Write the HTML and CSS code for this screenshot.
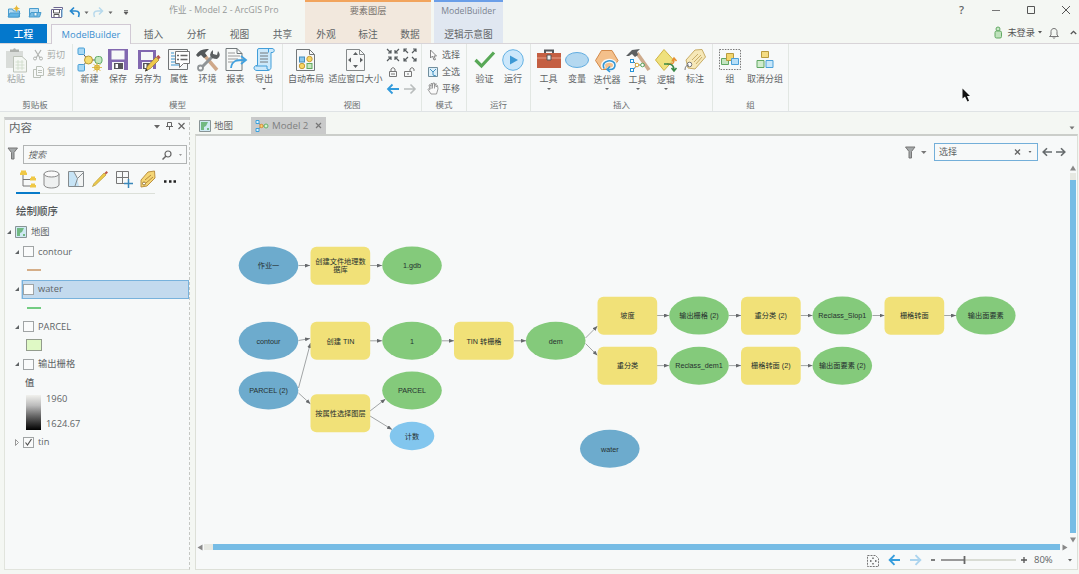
FILE: index.html
```html
<!DOCTYPE html>
<html lang="zh-CN">
<head>
<meta charset="utf-8">
<title>作业 - Model 2 - ArcGIS Pro</title>
<link rel="stylesheet" href="styles.css">
</head>
<body>
<header class="titlebar">
  <div class="quick">
    <svg width="137" height="24" viewBox="0 0 137 24">
      <g stroke="#489ccd" fill="#b5dcf3"><path d="M8.500 17V9h4l1 2h6v6z"/><path d="M8 17l2-4h10l-1.500 4z" fill="#62b5e5"/></g>
      <circle cx="16.500" cy="8.500" r="2" fill="#f2c84a"/><path d="M16.500 5.500v6M13.500 8.500h6" stroke="#dfb139" stroke-width=".8"/>
      <g stroke="#489ccd" fill="#b5dcf3"><path d="M29.500 17V8.500h9V12"/><path d="M29 17l2-4.500h10l-1.500 4.500z" fill="#75bce4"/><path d="M34 13v3h3v-3" fill="#f5f7f5"/></g>
      <path d="M53.500 7.500h9v2M51.500 9.500h10v8h-10z" fill="#fff" stroke="#6c6690"/><path d="M53.500 10v3h6v-3M54 17v-2.500h5V17" fill="none" stroke="#555"/><path d="M62 9v8" stroke="#58a8db"/>
      <path d="M74 7.500L70.500 11l3.500 3.500M71 11h4.500c3.500 0 4.500 2.500 3 6" fill="none" stroke="#2688ce" stroke-width="1.700"/>
      <path d="M84.500 11.500h4l-2 2.500z" fill="#666"/>
      <path d="M99 7.500l3.500 3.500-3.500 3.500M102 11h-4.500c-3.500 0-4.500 2.500-3 6" fill="none" stroke="#b7d9ec" stroke-width="1.500"/>
      <path d="M108.500 11.500h4l-2 2.500z" fill="#666"/><path d="M124 10.500h4M124 12h4l-2 2.500z" stroke="#555" fill="#555" stroke-width=".7"/>
    </svg>
  </div>
  <div class="app-title">作业 - Model 2 - ArcGIS Pro</div>
  <div class="context context-layer">要素图层</div>
  <div class="context context-model">ModelBuilder</div>
  <div class="window-buttons">
    <span class="help">?</span>
    <svg width="10" height="10"><path d="M1 5.500h8" stroke="#777"/></svg>
    <svg width="10" height="10"><path d="M1.500 1.500h7v7h-7z" fill="none" stroke="#555"/></svg>
    <svg width="10" height="10"><path d="M1 1l8 8M9 1l-8 8" stroke="#555"/></svg>
  </div>
</header>
<nav class="tabs">
  <a class="tab tab-file">工程</a>
  <a class="tab tab-active">ModelBuilder</a>
  <a class="tab">插入</a><a class="tab">分析</a><a class="tab">视图</a><a class="tab">共享</a>
  <div class="layer-tabs"><a class="tab">外观</a><a class="tab">标注</a><a class="tab">数据</a></div>
  <a class="tab tab-diagram">逻辑示意图</a>
  <div class="account">
    <svg width="10" height="13" viewBox="0 0 10 13"><circle cx="5" cy="3" r="2" fill="#c9e8c7" stroke="#62a963"/><rect x="2" y="5" width="6.500" height="7" rx="1.500" fill="#bfe2bc" stroke="#62a963"/></svg>
    <span class="user">未登录</span>
    <svg class="user-caret" width="4" height="3"><path d="M0 0h4l-2 2.500z" fill="#555"/></svg>
    <svg class="bell" width="10" height="12" viewBox="0 0 10 12"><path d="M.5 9.500L2 8V4.500C2 .5 8 .5 8 4.500V8l1.500 1.500zM4 10.500c0 1 2 1 2 0" fill="none" stroke="#777"/></svg>
    <svg class="collapse" width="7" height="5"><path d="M.8 4l2.700-2.700L6.200 4" fill="none" stroke="#555" stroke-width="1.300"/></svg>
  </div>
</nav>

<section class="ribbon">
  <div class="group group-clipboard">
    <div class="tools">
      <div class="tool faded"><svg width="22" height="26" viewBox="0 0 22 26"><path d="M1 4h17v17H1z" fill="#d9dcd9"/><path d="M5 5V2.500h3Q9.500 0 11 2.500h3V5z" fill="#aeb1ad"/><path d="M8.500 9.500H17l4.500 4V25h-13z" fill="#f4f7f3" stroke="#bdc3b9"/><path d="M10.500 15h8M10.500 18h9M10.500 21h9M13 13v10M17 13v10" stroke="#cfdcc9" stroke-width=".8"/></svg><span>粘贴</span></div>
      <div class="lines faded">
        <div class="line"><svg width="12" height="12"><path d="M3 1l5 8M9 1L4 9" stroke="#b0b3b0" stroke-width="1.200"/><circle cx="3" cy="9.500" r="1.500" fill="none" stroke="#b0b3b0"/><circle cx="9" cy="9.500" r="1.500" fill="none" stroke="#b0b3b0"/></svg><span>剪切</span></div>
        <div class="line"><svg width="12" height="12"><path d="M4.500.5h5l2 2v7h-7zM4 3.500H1.500v8h7V10M6 4.500h4M6 6.500h4" fill="none" stroke="#bbc1b9"/></svg><span>复制</span></div>
      </div>
    </div>
    <div class="caption">剪贴板</div>
  </div>
  <div class="group group-model">
    <div class="tools">
      <div class="tool"><svg width="26" height="26" viewBox="0 0 26 26"><path d="M4 4l7 9-7 8M11 13h10" fill="none" stroke="#555"/><rect x="1" y="1" width="6.500" height="6.500" rx="1" fill="#a8d8f4" stroke="#479fd6"/><rect x="1" y="17.500" width="6.500" height="6.500" rx="1" fill="#a8d8f4" stroke="#479fd6"/><circle cx="11.500" cy="13" r="4" fill="#f4dc72" stroke="#b89a33"/><rect x="18" y="9.500" width="7" height="7" rx="2.500" fill="#c5e8c1" stroke="#5faa68"/><circle cx="20" cy="20.500" r="2.500" fill="#f8e36d" stroke="#d6ad36"/><path d="M20 15.500v10M15 20.500h10M16.500 17l7 7M23.500 17l-7 7" stroke="#d6ad36" stroke-width=".8"/></svg><span>新建</span></div>
      <div class="tool"><svg width="22" height="26" viewBox="0 0 22 26"><path d="M1 2h20v21H1z" fill="#8268b0"/><path d="M4.500 3.500h13v9h-13zM5 15h12v8H5z" fill="#f7f8f8"/><path d="M7 16h9v6H7z" fill="#56545a"/><path d="M8.500 17h2.500v4H8.500z" fill="#fff"/></svg><span>保存</span></div>
      <div class="tool"><svg width="26" height="26" viewBox="0 0 26 26"><path d="M3 3h18v19H3z" fill="#8268b0"/><path d="M6 5h12v8H6zM7 15h11v7H7z" fill="#f7f8f8"/><path d="M8 16h7v6H8z" fill="#56545a"/><path d="M9.500 17h2v4h-2z" fill="#fff"/><path d="M10.500 24l2-5L21 10l3 3-8.500 8.500z" fill="#efc94b" stroke="#927a35" stroke-width=".7"/><path d="M21.500 9.500L23.500 8l2 2.500-2 2z" fill="#b4524c"/><path d="M10 24.500l1-3 2 1.800z" fill="#333"/></svg><span>另存为</span></div>
      <div class="tool"><svg width="22" height="26" viewBox="0 0 22 26"><path d="M.5 2.500h19v20H.5z" fill="#f7f8f8" stroke="#707476"/><path d="M3 6h3M3 9h4M3 12h4M3 15h4M3 18h9" stroke="#3b94ce" stroke-width="1.200"/><path d="M7.500 4.500h14v12h-6l-4 4v-4h-4z" fill="#fff" stroke="#777"/><path d="M9 8.500h2M9 12.500h2M12.500 8.500h7M12.500 12.500h7" stroke="#666" stroke-width="1.300"/></svg><span>属性</span></div>
      <div class="tool"><svg width="26" height="26" viewBox="0 0 26 26"><path d="M9 8l13 15" stroke="#cfa889" stroke-width="3.500"/><path d="M19 8L6 21" stroke="#909598" stroke-width="3"/><circle cx="5.500" cy="21" r="2.500" fill="#f7f8f8" stroke="#909598" stroke-width="1.800"/><path d="M1 8q4-7 13-6l-4 4 2 3-3 2-3-3-3 2z" fill="#535759"/><path d="M18 3v4l4 1 1-4q4 5-1 8-6 0-7-4 0-3 3-5z" fill="#5c6062"/></svg><span>环境</span></div>
      <div class="tool"><svg width="24" height="26" viewBox="0 0 24 26"><path d="M2 1.500h11l5 5v17H2z" fill="#f7f9f8" stroke="#71787b"/><path d="M13 1.500v5h5" fill="none" stroke="#71787b"/><path d="M4 6h7M4 9h12M4 12h10M4 15h5" stroke="#999" stroke-width="1"/><path d="M7 21c1-8 6-8 14-8" fill="none" stroke="#42a1df" stroke-width="1.800"/><path d="M17 9l5 4-5 4" fill="none" stroke="#42a1df" stroke-width="1.800"/></svg><span>报表</span></div>
      <div class="tool"><svg width="24" height="26" viewBox="0 0 24 26"><path d="M7 1.500h13c3 0 3 4 0 4h-1v15c0 2-2 3-3 3H5c-4 0-4-5 0-5h.5V3q0-1.500 1.500-1.500z" fill="#cce9fb" stroke="#429ed9"/><path d="M16.500 1.500v4M4 19h11q-1 4 2 4" fill="none" stroke="#429ed9"/><path d="M8 6h8M8 9h8M8 12h8M8 15h8" stroke="#72797c"/></svg><span>导出</span><i class="caret"></i></div>
    </div>
    <div class="caption">模型</div>
  </div>
  <div class="group group-view">
    <div class="tools">
      <div class="tool"><svg width="22" height="26" viewBox="0 0 22 26"><path d="M1.500 2.500h13l5 5v16h-18z" fill="#f7f8f8" stroke="#73787a"/><path d="M14.500 2.500v5h5" fill="none" stroke="#73787a"/><rect x="4.500" y="10" width="5" height="5" fill="#8ac8ed" stroke="#468ebb"/><circle cx="14.500" cy="12" r="2.700" fill="#f7d664" stroke="#c79c36"/><circle cx="7" cy="19" r="2.700" fill="#f7d664" stroke="#c79c36"/><rect x="12" y="16.500" width="5" height="5" fill="#c7e8c0" stroke="#61a95f"/></svg><span>自动布局</span></div>
      <div class="tool"><svg width="22" height="26" viewBox="0 0 22 26"><path d="M1.500 2.500h13l5 5v16h-18z" fill="#f7f8f8" stroke="#858a8b"/><path d="M14.500 2.500v5h5" fill="none" stroke="#858a8b"/><path d="M8 8l2.500-3L13 8zM8 18l2.500 3 2.500-3zM6 10.500L3 13l3 2.500zM15 10.500l3 2.500-3 2.500z" fill="#5c6062"/></svg><span>适应窗口大小</span></div>
      <div class="mini">
        <svg width="14" height="14" viewBox="0 0 14 14"><path d="M1 1l4 4M2 5h3V2M13 1L9 5M9 2v3h3M1 13l4-4M2 9h3v3M13 13L9 9M9 12V9h3" fill="none" stroke="#555b5e" stroke-width="1.200"/></svg>
        <svg width="14" height="14" viewBox="0 0 14 14"><path d="M5 5L1 1M4 1H1v3M9 5l4-4M10 1h3v3M5 9l-4 4M1 10v3h3M9 9l4 4M13 10v3h-3" fill="none" stroke="#555b5e" stroke-width="1.200"/></svg>
        <svg width="12" height="12"><path d="M2.500 5.500h7v5h-7zM4 5V3q2-3 4 0v2M4 8h4" fill="none" stroke="#777"/></svg>
        <svg width="13" height="12"><path d="M1.500 5.500h7v5h-7zM7 5V3q2-3 4 0v2M4 8h2" fill="none" stroke="#777"/></svg>
        <svg width="14" height="12"><path d="M13 6H2M6.500 1.500L2 6l4.500 4.500" fill="none" stroke="#329bdc" stroke-width="1.800"/></svg>
        <svg width="14" height="12"><path d="M1 6h11M7.500 1.500L12 6l-4.500 4.500" fill="none" stroke="#b9bdbd" stroke-width="1.600"/></svg>
      </div>
    </div>
    <div class="caption">视图</div>
  </div>
  <div class="group group-mode">
    <div class="lines">
      <div class="line"><svg width="12" height="12"><path d="M3.500 1v8l2-2 1.500 4 1.500-.5L7 7h2.500z" fill="#fafafa" stroke="#777" stroke-width=".9"/></svg><span>选择</span></div>
      <div class="line"><svg width="12" height="12"><path d="M1.500 1.500h9v9h-9z" fill="#dceffa" stroke="#718e9d"/><path d="M3 3l3 3 3-3M6 6v3l3 1" fill="none" stroke="#4694c3"/></svg><span>全选</span></div>
      <div class="line"><svg width="12" height="13"><path d="M4 12L1 7.500q0-1.500 2 0L2 3q1-1 2 1V1.500h1.300V4L6 1h1.500v3L9 1.500V5l1.500-1.500Q12 6 9.500 12zM4 4v3M5.500 4v2.500M7.500 4v2.500" fill="#fafafa" stroke="#858585" stroke-width=".8"/></svg><span>平移</span></div>
    </div>
    <div class="caption">模式</div>
  </div>
  <div class="group group-run">
    <div class="tools">
      <div class="tool"><svg width="22" height="26" viewBox="0 0 22 26"><path d="M1.500 13l6 6L20 5.500" fill="none" stroke="#58a857" stroke-width="3.200"/></svg><span>验证</span></div>
      <div class="tool"><svg width="24" height="26" viewBox="0 0 24 26"><circle cx="12" cy="13" r="10.300" fill="#cbe7fb" stroke="#66b3e4"/><path d="M9 8.500v9l8-4.500z" fill="#3d99d5"/></svg><span>运行</span></div>
    </div>
    <div class="caption">运行</div>
  </div>
  <div class="group group-insert">
    <div class="tools">
      <div class="tool"><svg width="26" height="26" viewBox="0 0 26 26"><path d="M9 6V3.500h8V6" fill="none" stroke="#54575a" stroke-width="2"/><path d="M1 6h24v15H1z" fill="#c45f42"/><path d="M1 11h10M15 11h10" stroke="#e7a18a" stroke-width="1.200"/><path d="M11 8h4v5h-4z" fill="#eee" stroke="#555"/></svg><span>工具</span><i class="caret"></i></div>
      <div class="tool"><svg width="26" height="26" viewBox="0 0 26 26"><ellipse cx="13" cy="13" rx="11.500" ry="7.500" fill="#b4d8f0" stroke="#62ade0"/></svg><span>变量</span></div>
      <div class="tool low"><svg width="26" height="26" viewBox="0 0 26 26"><path d="M7.500 3.500h10.500l6 10-6 9H7.500l-6-9z" fill="#f4c08b" stroke="#d28a4b"/><path d="M10 21.500c-5-9 11-10 11-3.500 0 3-2 4.500-5 4.500h-3" fill="none" stroke="#f7f8f8" stroke-width="4"/><path d="M10 21.500c-4-9 11-10 11-3.500 0 3-2 4.500-5 4.500h-3M16 19.500L13 22.500l3 2.500" fill="none" stroke="#3597d4" stroke-width="1.600"/></svg><span>迭代器</span><i class="caret"></i></div>
      <div class="tool low"><svg width="26" height="26" viewBox="0 0 26 26"><path d="M12 6l12 17" stroke="#ceab8c" stroke-width="3.600"/><path d="M1 9l6-6 8-1-3 3 1 3-3 2-3-3-3 2z" fill="#5b5f61"/><path d="M8 14l4 4-4 5M12 18h8" fill="none" stroke="#777"/><rect x="5.500" y="12.500" width="3" height="3" fill="#fff" stroke="#2693d8"/><rect x="5.500" y="21.500" width="3" height="3" fill="#fff" stroke="#2693d8"/><circle cx="12" cy="18" r="1.800" fill="#fff" stroke="#dca832"/><circle cx="17.500" cy="18" r="1.800" fill="#fff" stroke="#58a55a"/></svg><span>工具</span><i class="caret"></i></div>
      <div class="tool low"><svg width="26" height="26" viewBox="0 0 26 26"><path d="M11 2.500L20.500 13 11 23.500 2.500 13z" fill="#efe17d" stroke="#d0b545"/><path d="M14 17h4q3 0 3-5m-2 2l2-3 2.500 3" fill="none" stroke="#e69234" stroke-width="1.500"/><path d="M11 17h4q6 0 6 6m-2.500-2l2.500 3 2.500-3" fill="none" stroke="#398947" stroke-width="1.600"/></svg><span>逻辑</span><i class="caret"></i></div>
      <div class="tool"><svg width="26" height="26" viewBox="0 0 26 26"><path d="M4 13L13 3l7-.5 3.500 7.500L13 22l-7-1z" fill="#f6e8b8" stroke="#c8ad67"/><path d="M10 13l6-6M12 15l7-7M14 17l6-7" stroke="#c8ad67"/><circle cx="7.500" cy="17.500" r="2.300" fill="#fff" stroke="#777"/><path d="M7 18q-4 0-4 5" fill="none" stroke="#777"/></svg><span>标注</span></div>
    </div>
    <div class="caption">插入</div>
  </div>
  <div class="group group-group">
    <div class="tools">
      <div class="tool"><svg width="24" height="26" viewBox="0 0 24 26"><path d="M1.500 2.500h21v20h-21z" fill="none" stroke="#777" stroke-dasharray="1.500 1.200"/><path d="M3.500 11.500h7v6h-7z" fill="#c4e5c0" stroke="#60a763"/><path d="M8.500 6.500h7v7h-7z" fill="#f2d56c" stroke="#b99b3e"/><path d="M13.500 11.500h7v6h-7z" fill="#b7dff7" stroke="#4ba1d9"/></svg><span>组</span></div>
      <div class="tool"><svg width="24" height="26" viewBox="0 0 24 26"><path d="M8.500 4.500h7v6h-7z" fill="#f4dc83" stroke="#b99b3e"/><path d="M4 13.500h7v7H4z" fill="#d0eccd" stroke="#60a763"/><path d="M13 13.500h7v7h-7z" fill="#c8e7fa" stroke="#4ba1d9"/></svg><span>取消分组</span></div>
    </div>
    <div class="caption">组</div>
  </div>
</section>

<main class="workspace">
  <aside class="contents">
    <div class="pane-head"><h1>内容</h1>
      <svg width="36" height="10" viewBox="0 0 36 10"><path d="M2 4h6L5 7.500z" fill="#666"/><path d="M15.500 5.500V1.500h4v4M14 5.500h7M17.500 6v3" stroke="#666" fill="none"/><path d="M26.500 2l6 6M32.500 2l-6 6" stroke="#666" stroke-width="1.200"/></svg>
    </div>
    <div class="find-row">
      <svg width="12" height="13"><path d="M1 1h9.500L7 5.500V12H4.500V5.500z" fill="#a4a8a9" stroke="#777"/></svg>
      <div class="find"><span>搜索</span><svg width="22" height="10" viewBox="0 0 22 10"><circle cx="6" cy="4" r="3" fill="none" stroke="#666" stroke-width="1.200"/><path d="M4 6L.5 9.500" stroke="#666" stroke-width="1.500"/><path d="M17 4h3l-1.500 2z" fill="#999"/></svg></div>
    </div>
    <div class="modes">
      <svg width="160" height="24" viewBox="0 0 160 24">
        <path d="M7 7v11h7M7 11.500h7" fill="none" stroke="#777"/><path d="M4 7V4.500h1V2.500h5v2h1V7zM14 12.500V10h1V8.500h4V10h1v2.500zM14 19.500V17h1v-1.500h4V17h1v2.500z" fill="#efc846"/>
        <path d="M28 6v11c1 4 14 4 15 0V6" fill="#eef0f0" stroke="#888"/><ellipse cx="35.500" cy="6" rx="7.500" ry="3" fill="#fafafa" stroke="#888"/>
        <path d="M52.500 3.500h15v15h-15z" fill="#f2f4f4" stroke="#858b8e"/><path d="M53 4h5l3 6 2 8H53z" fill="#c7e4f6"/><path d="M58 4l3.500 6.500L59 18M61.500 10.500L67 5" fill="none" stroke="#858b8e"/>
        <path d="M76.500 18.500l1.500-3L88 5l2 2-10.500 10z" fill="#edca4a" stroke="#b99a35" stroke-width=".7"/><path d="M88.500 5l2-2 1.500 1.500-2 2z" fill="#bd5748"/>
        <path d="M100.500 3.500h12v12h-12zM106.500 3.500v12M100.500 9.500h12" fill="none" stroke="#777"/><path d="M108 15.500h9M112.500 11v9" stroke="#3987ba" stroke-width="1.500"/>
        <path d="M125 12l7-8 6.500-1 .5 7-8 8-6 1z" fill="#f5d675" stroke="#bc9142"/><path d="M129 12l6-5M130 15l7-6" stroke="#b88b3d"/><circle cx="128" cy="15.500" r="1.500" fill="#fff" stroke="#997735"/>
        <path d="M148 13.500h2.500M153 13.500h2.500M157.500 13.500h2.500" stroke="#222" stroke-width="2.300"/>
      </svg>
      <div class="mode-track"><i></i></div>
    </div>
    <h2>绘制顺序</h2>
    <div class="tree">
      <div class="node root"><i class="open"></i><svg class="map-icon" width="12" height="12"><path d="M.5.500h11v11H.5z" fill="#cfeaf3" stroke="#889495"/><path d="M2 2h7L7 6 5 7v3H2zM8 8h2v2H8z" fill="#71b982"/></svg><span>地图</span></div>
      <div class="node"><i class="open"></i><b class="check"></b><span>contour</span></div>
      <div class="symbol"><i class="stroke stroke-contour"></i></div>
      <div class="node selected"><i class="open"></i><b class="check"></b><span>water</span></div>
      <div class="symbol"><i class="stroke stroke-water"></i></div>
      <div class="node"><i class="open"></i><b class="check"></b><span>PARCEL</span></div>
      <div class="symbol"><i class="patch"></i></div>
      <div class="node"><i class="open"></i><b class="check"></b><span>输出栅格</span></div>
      <div class="value">值</div>
      <div class="ramp"><i></i><div class="ramp-text"><span>1960</span><span>1624.67</span></div></div>
      <div class="node"><svg class="closed" width="5" height="7"><path d="M.5.500v6l3-3z" fill="none" stroke="#999"/></svg><b class="check"><svg width="9" height="9"><path d="M1.500 4.500l2 2.500 4-6" fill="none" stroke="#555" stroke-width="1.200"/></svg></b><span>tin</span></div>
    </div>
  </aside>

  <section class="document">
    <div class="doc-tabs">
      <div class="doc-tab"><svg class="map-icon" width="12" height="12"><path d="M.5.500h11v11H.5z" fill="#cfeaf3" stroke="#889495"/><path d="M2 2h7L7 6 5 7v3H2zM8 8h2v2H8z" fill="#71b982"/></svg><span>地图</span></div>
      <div class="doc-tab current"><svg width="14" height="12"><path d="M3 2l3 4-3 4M6 6h5" fill="none" stroke="#888"/><path d="M1 .5h3v3H1zM1 8.500h3v3H1z" fill="#dff2fb" stroke="#3ba1dd"/><circle cx="6.500" cy="6" r="1.700" fill="#f7d371" stroke="#d78c36"/><circle cx="11" cy="6" r="2" fill="#d8efd4" stroke="#62b367"/></svg><span>Model 2</span><svg width="7" height="7"><path d="M1 1l5 5M6 1L1 6" stroke="#777" stroke-width="1.200"/></svg></div>
      <svg class="doc-menu" width="6" height="4"><path d="M.5.500h5L3 3.500z" fill="#777"/></svg>
    </div>
    <div class="canvas">
      <div class="canvas-bar">
        <svg width="22" height="13"><path d="M.5 1H10L6.500 5.500V12H4V5.500z" fill="#a4a8a9" stroke="#777"/><path d="M16 5h5.500l-2.700 3z" fill="#777"/></svg>
        <div class="filter"><span>选择</span><svg width="20" height="8"><path d="M1 1.500l5 5M6 1.500l-5 5" stroke="#666" stroke-width="1.300"/><path d="M14.500 3h3L16 5z" fill="#666"/></svg></div>
        <svg width="24" height="10"><path d="M10 5H1.500M5 1.200L1.200 5 5 8.800M14 5h8.500M19 1.200L22.800 5 19 8.800" fill="none" stroke="#666b6d" stroke-width="1.600"/></svg>
      </div>
      <div class="canvas-body">
        <svg class="diagram" width="874" height="378" viewBox="195 165 874 378">
          <defs><marker id="arrow" viewBox="0 0 5 4" refX="5" refY="2" markerWidth="5" markerHeight="4" markerUnits="userSpaceOnUse" orient="auto"><path d="M0 0l5 2-5 2z"/></marker></defs>
          <g class="edges">
            <path d="M298.500 265.500H310"/><path d="M370 265.500H382"/>
            <path d="M298.500 340.500L310 338.500"/><path d="M370 340.800H382"/><path d="M442 340.800H454"/><path d="M514 340.800H526"/>
            <path d="M298.500 388L310.500 343"/><path d="M298.500 393L310.500 404"/><path d="M370 411L385.500 399"/><path d="M370 416L392 429.500"/>
            <path d="M585.500 338L597.500 326"/><path d="M585.500 343.500L597.500 355.500"/>
            <path d="M657 315.500H669"/><path d="M729 315.500H741"/><path d="M800.500 315.500H812.500"/><path d="M872.500 315.500H884.500"/><path d="M944 315.500H956"/>
            <path d="M657 365.600H669"/><path d="M729 365.600H741"/><path d="M800.500 365.600H812.500"/>
          </g>
          <g class="input"><ellipse cx="268.500" cy="265.500" rx="29.800" ry="19"/><ellipse cx="268.500" cy="340.700" rx="29.800" ry="19"/><ellipse cx="268.500" cy="390.500" rx="29.800" ry="19"/><ellipse cx="609.800" cy="448.800" rx="29.800" ry="19"/></g>
          <g class="process"><rect x="310.500" y="246.700" width="59.700" height="38" rx="6"/><rect x="310.500" y="321.800" width="59.700" height="38" rx="6"/><rect x="454" y="321.800" width="59.700" height="38" rx="6"/><rect x="310.500" y="394.200" width="59.700" height="38" rx="6"/><rect x="597.500" y="296.800" width="59.700" height="38" rx="6"/><rect x="741" y="296.800" width="59.700" height="38" rx="6"/><rect x="884.500" y="296.800" width="59.700" height="38" rx="6"/><rect x="597.500" y="346.800" width="59.700" height="38" rx="6"/><rect x="741" y="346.800" width="59.700" height="38" rx="6"/></g>
          <g class="output"><ellipse cx="412" cy="265.500" rx="29.800" ry="19"/><ellipse cx="412" cy="340.700" rx="29.800" ry="19"/><ellipse cx="555.700" cy="340.700" rx="29.800" ry="19"/><ellipse cx="412" cy="390.500" rx="29.800" ry="19"/><ellipse cx="699" cy="315.600" rx="29.800" ry="19"/><ellipse cx="842.300" cy="315.600" rx="29.800" ry="19"/><ellipse cx="985.800" cy="315.600" rx="29.800" ry="19"/><ellipse cx="699" cy="365.700" rx="29.800" ry="19"/><ellipse cx="842.300" cy="365.700" rx="29.800" ry="19"/></g>
          <ellipse class="derived" cx="412" cy="436" rx="22.300" ry="14.200"/>
          <g class="labels">
            <text x="268.500" y="268">作业一</text><text x="340.500" y="264">创建文件地理数</text><text x="340.500" y="272">据库</text><text x="412" y="268">1.gdb</text>
            <text x="268.500" y="343.500">contour</text><text x="340.500" y="343.500">创建 TIN</text><text x="412" y="343.500">1</text><text x="484" y="343.500">TIN 转栅格</text><text x="555.700" y="343.500">dem</text>
            <text x="268.500" y="393.200">PARCEL (2)</text><text x="340.500" y="416">按属性选择图层</text><text x="412" y="393.200">PARCEL</text><text x="412" y="438.700">计数</text>
            <text x="627.500" y="318.300">坡度</text><text x="699" y="318.300">输出栅格 (2)</text><text x="770.800" y="318.300">重分类 (2)</text><text x="842.300" y="318.300">Reclass_Slop1</text><text x="914.300" y="318.300">栅格转面</text><text x="985.800" y="318.300">输出面要素</text>
            <text x="627.500" y="368.300">重分类</text><text x="699" y="368.300">Reclass_dem1</text><text x="770.800" y="368.300">栅格转面 (2)</text><text x="842.300" y="368.300">输出面要素 (2)</text><text x="609.800" y="451.500">water</text>
          </g>
        </svg>
        <div class="vscroll"><svg width="7" height="6"><path d="M0 5.500h6L3 .5z" fill="#888"/></svg><i class="track"></i><i class="thumb"></i><svg width="7" height="6"><path d="M0 .5h6L3 5.500z" fill="#888"/></svg></div>
      </div>
      <div class="hscroll"><svg width="6" height="7"><path d="M5.500.500v6L.5 3.500z" fill="#888"/></svg><i class="track"></i><i class="thumb"></i><svg width="6" height="7"><path d="M.5.500v6l5-3z" fill="#888"/></svg></div>
      <div class="status">
        <svg width="12" height="13" viewBox="0 0 12 13"><path d="M.5 1.500h8l3 3v8H.5z" fill="none" stroke="#777" stroke-dasharray="2 1"/><path d="M6 3.500v1.500M6 9v1.500M3 7h1.500M8 7h1.500" stroke="#555" stroke-width="1.300"/></svg>
        <svg class="nav-left" width="13" height="12"><path d="M12 6H2M6.500 1.200L1.700 6l4.800 4.800" fill="none" stroke="#369ddd" stroke-width="1.900"/></svg>
        <svg class="nav-right" width="13" height="12"><path d="M1 6h10M6.500 1.200L11.300 6l-4.800 4.800" fill="none" stroke="#acd4ee" stroke-width="1.900"/></svg>
        <svg class="zoom-slider" width="98" height="10"><path d="M1 5h4M91 5h6M94 2v6" stroke="#555" stroke-width="1.300"/><path d="M34 5h52" stroke="#d9dcd4" stroke-width="2"/><path d="M11 5h23" stroke="#999" stroke-width="2"/><path d="M34.500 1v8" stroke="#666" stroke-width="1.800"/></svg>
        <span>80%</span>
        <svg width="4" height="3"><path d="M0 0h4l-2 2.500z" fill="#666"/></svg>
      </div>
    </div>
  </section>
</main>
<svg class="pointer" width="9" height="14" viewBox="0 0 9 14"><path d="M.5.500v10L3 8.500l2.500 5 1.500-.8L5 8h3z" fill="#111"/></svg>
</body>
</html>
```
FILE: styles.css
```css
* { box-sizing: border-box; }
body {
  margin: 0;
  width: 1079px;
  height: 574px;
  overflow: hidden;
  display: flex;
  flex-direction: column;
  background: #f4f7f3;
  color: #606466;
  font: 9px/12px "Open Sans", "Noto Sans CJK SC", sans-serif;
}
svg { display: block; flex: none; }
i { display: block; }

.titlebar { display: flex; height: 24px; flex: none; }
.quick { width: 169px; }
.app-title { width: 136px; padding-top: 4px; color: #969999; font-size: 8.850px; white-space: nowrap; }
.context { text-align: center; padding-top: 2px; font-size: 9.200px; line-height: 14px; }
.context-layer { width: 126px; background: #f2e8dd; border-top: 2px solid #f2a45d; color: #77716c; }
.context-model { width: 69px; margin-left: 3px; background: #e0e7f1; border-top: 2px solid #6a9ee8; color: #7b8490; font-size: 8.700px; }
.window-buttons { display: flex; align-items: center; gap: 25px; margin-left: auto; padding: 0 8px 4px 0; }
.help { width: 9px; font-size: 11px; font-weight: 600; text-align: center; }

.tabs { display: flex; height: 20px; flex: none; border-bottom: 1px solid #d8d4d8; }
.tab { display: block; width: 43px; height: 20px; text-align: center; font-size: 9.700px; line-height: 21px; white-space: nowrap; }
.tab-file { width: 47px; height: 19px; background: #0478cc; color: #fff; font-weight: 500; }
.tab-active { width: 80px; margin: 0 1px 0 4px; background: #f7f9f9; border: 1px solid #d1c9d4; border-bottom: 0; color: #3b8fd0; font-size: 9.400px; line-height: 19px; }
.layer-tabs { display: flex; width: 126px; margin-left: 1px; background: #f2e8dd; height: 19px; }
.layer-tabs .tab { flex: 1; }
.tab-diagram { width: 69px; height: 19px; margin-left: 3px; background: #e0e7f1; }
.account { display: flex; align-items: center; margin-left: auto; padding: 0 2px 2px 0; }
.user { margin-left: 4px; font-size: 9.200px; color: #555; }
.user-caret { margin-left: 3px; }
.bell { margin-left: 7px; }
.collapse { margin-left: 11px; }

.ribbon { display: flex; height: 68px; flex: none; background: #f7f9f9; border-bottom: 1px solid #dfe3e5; }
.group { display: flex; flex-direction: column; justify-content: space-between; padding-bottom: 1px; border-right: 1px solid #e2e7e3; }
.caption { text-align: center; font-size: 8.500px; line-height: 11px; color: #6b6f71; }
.tools { display: grid; }
.tool { display: flex; flex-direction: column; align-items: center; min-width: 0; padding-top: 3px; white-space: nowrap; }
.tool span { line-height: 12px; }
.low span { margin-top: 1px; }
.caret { margin-top: 3px; border: 2px solid transparent; border-top: 2.500px solid #666; border-bottom: 0; }
.low .caret { margin-top: 2px; }
.group-clipboard { width: 73px; }
.group-clipboard .tools { grid-template-columns: 32px 40px; }
.group-clipboard .caption { padding-right: 2px; }
.faded { color: #a6aaa8; }
.lines { padding-top: 2px; }
.line { display: flex; align-items: center; gap: 3px; height: 17px; }
.group-model { width: 210px; }
.group-model .tools { grid-template-columns: 33px 24px 36px 26px 31px 25px 32px; }
.group-view { width: 139px; }
.group-view .tools { grid-template-columns: 46px 53px 38px; }
.mini { display: grid; grid-template-columns: 17px 17px; grid-auto-rows: 17px; place-items: center; padding: 2px 0 0 2px; }
.group-mode { width: 45px; }
.group-mode .lines { padding-left: 5px; }
.group-run { width: 64px; }
.group-run .tools { grid-template-columns: 35px 22px; }
.group-insert { width: 182px; }
.group-insert .tools { grid-template-columns: 35px 22px 38px 23px 34px 24px; }
.group-group { width: 76px; }
.group-group .tools { grid-template-columns: 34px 36px; }

.workspace { display: flex; flex: 1; min-height: 0; padding: 5px 1px 4px 4px; gap: 5px; }
.contents { width: 186px; height: 453px; background: #f7f9f9; border: 1px solid #e1e4dd; border-top: 3px solid #cacccc; border-right: 1px dashed #c6c8c4; }
.pane-head { display: flex; justify-content: space-between; height: 20px; padding: 1px 1px 0 4px; }
h1 { margin: 0; font-size: 11.500px; line-height: 14px; font-weight: 400; }
.find-row { display: flex; align-items: center; gap: 4px; height: 25px; padding: 2px 2px 0 2px; }
.find { display: flex; flex: 1; align-items: center; justify-content: space-between; height: 19px; margin-top: 2px; border: 1px solid #b1b4b4; padding: 0 2px 0 4px; font-style: italic; }
.modes { height: 32px; padding: 3px 0 0 11px; }
.mode-track { width: 139px; height: 2px; border-bottom: 1px solid #dce0d9; }
.mode-track i { width: 24px; height: 2px; background: #087bc9; }
h2 { margin: 6px 0 0 11px; font-size: 10.500px; line-height: 16px; font-weight: 500; color: #505456; }
.tree { padding-top: 3px; font-size: 9.300px; }
.node { display: flex; align-items: center; height: 19px; padding-left: 10px; gap: 4px; }
.root { height: 20px; padding-left: 2px; }
.open { width: 0; height: 0; border-left: 4.500px solid transparent; border-bottom: 4.500px solid #606466; }
.closed { margin-right: -1px; }
.check { width: 11px; height: 11px; flex: none; background: #fafbfb; border: 1px solid #a0a4a5; }
.symbol { display: flex; align-items: center; height: 18.500px; padding-left: 21px; }
.stroke { width: 14px; height: 2px; margin-left: 1px; }
.stroke-contour { background: #d5ae88; }
.stroke-water { background: #73cc82; }
.selected { background: linear-gradient(90deg, transparent 16px, #c3daee 16px); position: relative; }
.selected::after { content: ""; position: absolute; inset: 0 0 0 17px; border: 1px solid #78b2dc; }
.patch { width: 16px; height: 12px; background: #dff9c5; border: 1px solid #939c8d; }
.value { height: 17px; padding-left: 20px; line-height: 17px; font-weight: 500; }
.ramp { display: flex; gap: 5px; height: 42px; padding: 4px 0 3px 21px; }
.ramp > i { width: 15px; height: 35px; background: linear-gradient(#f1f1ed, #bbb 30%, #666 60%, #000); }
.ramp-text { display: flex; flex-direction: column; justify-content: space-between; margin-top: -2px; }
.ramp-text span { line-height: 12px; }

.document { flex: 1; display: flex; flex-direction: column; min-width: 0; }
.doc-tabs { display: flex; height: 17px; flex: none; align-items: stretch; }
.doc-tab { display: flex; align-items: center; gap: 3px; width: 56px; padding-left: 4px; font-size: 9.500px; color: #666; }
.current { width: 75px; background: #c9caca; padding: 0 4px; font-size: 9.700px; color: #7e8080; white-space: nowrap; }
.current svg:last-child { margin-left: auto; }
.doc-menu { margin: 9px 3px 0 auto; }
.canvas { flex: none; display: flex; flex-direction: column; background: #f7f9f9; border: 1px solid #dde0d8; border-top: 2px solid #cbceca; height: 436px; }
.canvas-bar { display: flex; height: 29px; flex: none; justify-content: flex-end; align-items: center; padding: 3px 11px 0 0; }
.filter { display: flex; align-items: center; justify-content: space-between; width: 104px; height: 18px; margin: 0 4px 0 7px; padding: 0 3px 0 4px; border: 1px solid #73afd9; }
.canvas-body { display: flex; height: 378px; flex: none; margin-left: -1px; }
.vscroll { display: flex; flex-direction: column; align-items: center; width: 8px; }
.vscroll .track { width: 6px; height: 7px; margin-top: 2px; background: #e6e8e2; }
.vscroll .thumb { width: 6px; height: 353px; margin-bottom: 4px; background: #76bce5; }
.hscroll { display: flex; align-items: center; height: 8px; flex: none; padding-left: 1px; }
.hscroll .track { width: 9px; height: 6px; margin-left: 1px; background: #e6e8e2; }
.hscroll .thumb { width: 847px; height: 6px; margin-right: 2px; background: #76bce5; }
.status { display: flex; align-items: center; height: 18px; flex: none; justify-content: flex-end; padding-right: 5px; }
.nav-left { margin-left: 9px; }
.nav-right { margin-left: 8px; }
.zoom-slider { margin-left: 8px; }
.status span { width: 34px; margin-left: 6px; font-size: 9.500px; }

.edges path { fill: none; stroke: #8b8f91; stroke-width: .8; marker-end: url(#arrow); }
#arrow path { fill: #66696c; stroke: none; }
.input { fill: #6dabcd; }
.process { fill: #f1e178; }
.output { fill: #84ca7b; }
.derived { fill: #82c6ee; }
.labels { fill: #26302f; font: 7.200px "Liberation Sans", "Noto Sans CJK SC", sans-serif; text-anchor: middle; }
.pointer { position: absolute; left: 962px; top: 88px; }
```
